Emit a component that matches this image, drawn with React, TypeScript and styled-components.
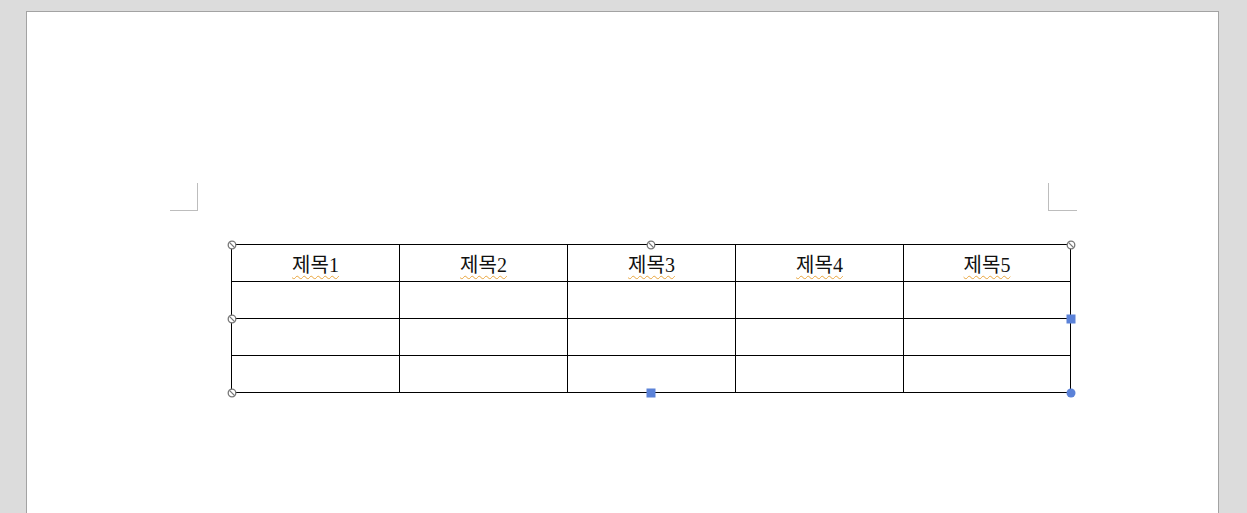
import styled, { createGlobalStyle } from 'styled-components';

const GlobalStyle = createGlobalStyle`
  html, body {
    margin: 0;
    padding: 0;
    background: #dcdcdc;
    overflow: hidden;
  }
`;

const Canvas = styled.div`
  width: 1247px;
  height: 513px;
  padding: 11px 0 0 26px;
  box-sizing: border-box;
  overflow: hidden;
`;

const Page = styled.div`
  width: 1193px;
  height: 600px;
  box-sizing: border-box;
  background: #ffffff;
  border: 1px solid #a3a3a3;
  border-bottom: none;
  padding: 171px 0 0 143px;
`;

const MarkRow = styled.div`
  width: 907px;
  display: flex;
  justify-content: space-between;
`;

const CornerMark = styled.div<{ $side: 'left' | 'right' }>`
  width: ${({ $side }) => ($side === 'left' ? 28 : 29)}px;
  height: 28px;
  box-sizing: border-box;
  border-bottom: 1px solid #bdbdbd;
  ${({ $side }) =>
    $side === 'left' ? 'border-right: 1px solid #bdbdbd;' : 'border-left: 1px solid #bdbdbd;'}
`;

const TableWrap = styled.div`
  position: relative;
  margin: 33px 0 0 61px;
  width: 840px;
`;

const Grid = styled.div`
  display: grid;
  grid-template-columns: 168px 168px 168px 168px 167px;
  grid-auto-rows: 37px;
  border-left: 1px solid #000;
  border-top: 1px solid #000;
  width: max-content;
`;

const Cell = styled.div`
  box-sizing: border-box;
  border-right: 1px solid #000;
  border-bottom: 1px solid #000;
  display: flex;
  align-items: center;
  justify-content: center;
  font-family: 'Liberation Serif', 'Noto Sans CJK KR', serif;
  font-size: 20px;
  color: #111;
`;

const Title = styled.span`
  text-decoration: underline wavy #e9a53c;
  text-decoration-thickness: 1px;
  text-underline-offset: 3px;
`;

const Handle = styled.div<{ $x: number; $y: number }>`
  position: absolute;
  left: ${({ $x }) => $x}px;
  top: ${({ $y }) => $y}px;
  transform: translate(-50%, -50%);
  display: flex;
`;

const BlueSquare = styled.div`
  width: 9px;
  height: 9px;
  background: #5b82d8;
`;

const BlueDot = styled.div`
  width: 9px;
  height: 9px;
  border-radius: 50%;
  background: #5b82d8;
`;

const BlockedIcon = () => (
  <svg width="10" height="10" viewBox="0 0 10 10">
    <circle cx="5" cy="5" r="3.8" fill="#fff" stroke="#777" strokeWidth="1.3" />
    <line x1="2.4" y1="2.4" x2="7.6" y2="7.6" stroke="#777" strokeWidth="1.3" />
  </svg>
);

const titles = ['제목1', '제목2', '제목3', '제목4', '제목5'];

export default function App() {
  return (
    <>
      <GlobalStyle />
      <Canvas>
        <Page>
          <MarkRow>
            <CornerMark $side="left" />
            <CornerMark $side="right" />
          </MarkRow>
          <TableWrap>
            <Grid>
              {titles.map((t) => (
                <Cell key={t}>
                  <Title>{t}</Title>
                </Cell>
              ))}
              {Array.from({ length: 15 }).map((_, i) => (
                <Cell key={i} />
              ))}
            </Grid>
            <Handle $x={0.5} $y={0.5}><BlockedIcon /></Handle>
            <Handle $x={419.5} $y={0.5}><BlockedIcon /></Handle>
            <Handle $x={839.5} $y={0.5}><BlockedIcon /></Handle>
            <Handle $x={0.5} $y={74.5}><BlockedIcon /></Handle>
            <Handle $x={0.5} $y={148.5}><BlockedIcon /></Handle>
            <Handle $x={839.5} $y={74.5}><BlueSquare /></Handle>
            <Handle $x={419.5} $y={148.5}><BlueSquare /></Handle>
            <Handle $x={839.5} $y={148.5}><BlueDot /></Handle>
          </TableWrap>
        </Page>
      </Canvas>
    </>
  );
}
